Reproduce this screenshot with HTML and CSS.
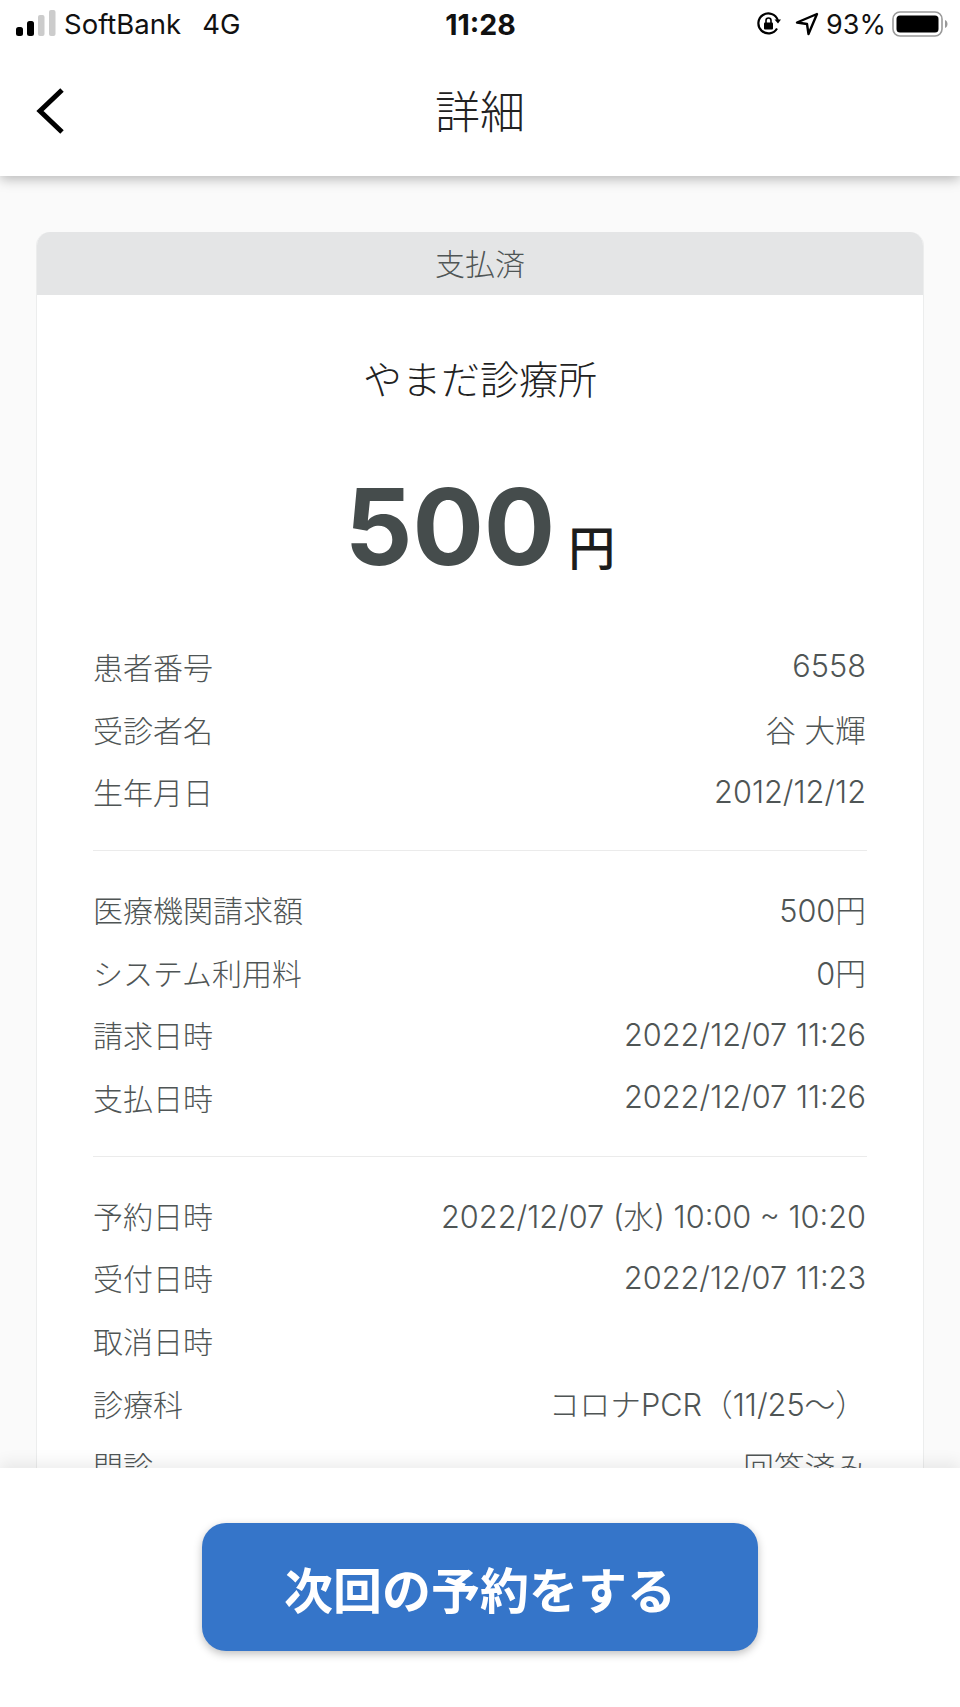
FILE: index.html
```html
<!DOCTYPE html>
<html lang="ja">
<head>
<meta charset="utf-8">
<title>詳細</title>
<link rel="stylesheet" href="styles.css">
</head>
<body>
<div class="app">
  <div class="top">
    <div class="status">
      <div class="status-left">
        <svg class="signal" width="40" height="26" viewBox="0 0 40 26"><rect x="0" y="17" width="7" height="9" rx="2.500" fill="#000"/><rect x="11" y="11" width="7" height="15" rx="2.500" fill="#000"/><rect x="22" y="5" width="6.500" height="21" rx="2" fill="#ccc"/><rect x="33" y="0" width="6.500" height="26" rx="2" fill="#ccc"/></svg>
        <span class="carrier">SoftBank</span><span class="net">4G</span>
      </div>
      <div class="time">11:28</div>
      <div class="status-right">
        <svg width="26" height="26" viewBox="0 0 26 26"><path d="M21 17.500A10 10 0 1 1 21.800 9" fill="none" stroke="#000" stroke-width="2.200"/><path d="M18.500 8.500h6.500l-3 4z" fill="#000"/><rect x="8" y="11.500" width="9" height="7" rx="1" fill="#000"/><path d="M10 12V9.500a2.500 2.500 0 0 1 5 0V12" fill="none" stroke="#000" stroke-width="1.600"/></svg>
        <svg class="arrow" width="24" height="24" viewBox="0 0 24 24"><path d="M22 2 2 10.500l10 1.500 1.500 10z" fill="none" stroke="#000" stroke-width="2.400" stroke-linejoin="round"/></svg>
        <span class="pct">93%</span>
        <svg width="56" height="26" viewBox="0 0 56 26"><rect x="1" y="1" width="49" height="24" rx="7" fill="none" stroke="#999" stroke-width="1.600"/><rect x="4.500" y="4.500" width="42" height="17" rx="3.500" fill="#000"/><path d="M53 9c2 1 2.500 2.500 2.500 4s-.5 3-2.500 4z" fill="#999"/></svg>
      </div>
    </div>
    <header class="nav">
      <svg class="back" width="30" height="46" viewBox="0 0 30 46"><path d="M26 2 4 23l22 21" fill="none" stroke="#000" stroke-width="5"/></svg>
      <h1 class="title">詳細</h1>
    </header>
  </div>
  <main class="content">
    <section class="card">
      <div class="state">支払済</div>
      <div class="card-body">
        <h2 class="clinic">やまだ診療所</h2>
        <p class="amount"><span class="num">500</span><span class="yen">円</span></p>
        <div class="group">
          <div class="row"><span>患者番号</span><span class="val">6558</span></div>
          <div class="row"><span>受診者名</span><span class="val">谷 大輝</span></div>
          <div class="row"><span>生年月日</span><span class="val">2012/12/12</span></div>
        </div>
        <div class="group">
          <div class="row"><span>医療機関請求額</span><span class="val">500円</span></div>
          <div class="row"><span>システム利用料</span><span class="val">0円</span></div>
          <div class="row"><span>請求日時</span><span class="val">2022/12/07 11:26</span></div>
          <div class="row"><span>支払日時</span><span class="val">2022/12/07 11:26</span></div>
        </div>
        <div class="group">
          <div class="row"><span>予約日時</span><span class="val">2022/12/07 (水) 10:00 ~ 10:20</span></div>
          <div class="row"><span>受付日時</span><span class="val">2022/12/07 11:23</span></div>
          <div class="row"><span>取消日時</span><span class="val"></span></div>
          <div class="row"><span>診療科</span><span class="val">コロナPCR（11/25〜）</span></div>
          <div class="row"><span>問診</span><span class="val">回答済み</span></div>
        </div>
      </div>
    </section>
  </main>
  <footer class="foot">
    <button class="cta" type="button">次回の予約をする</button>
  </footer>
</div>
</body>
</html>
```
FILE: styles.css
```css
* { box-sizing: border-box; }
html, body { margin: 0; padding: 0; height: 100%; overflow: hidden; }
body {
  font-family: Inter, "Noto Sans CJK JP", sans-serif;
  color: #4f5555;
  background: #fafafa;
}
.app { display: flex; flex-direction: column; height: 1707px; }
.top {
  position: relative;
  z-index: 2;
  flex: none;
  height: 176px;
  background: #fff;
  box-shadow: 0 3px 12px rgba(0, 0, 0, 0.28);
}
.status {
  display: grid;
  grid-template-columns: 1fr auto 1fr;
  align-items: center;
  height: 48px;
  padding: 0 12px 0 16px;
  font-family: Inter, "Liberation Sans", sans-serif;
  font-size: 27.500px;
  color: #111;
}
.status-left { display: flex; align-items: center; }
.signal { margin-right: 8px; margin-top: -2px; }
.net { margin-left: 21px; }
.time { font-weight: 700; font-size: 28.500px; margin-left: -3px; }
.status-right { display: flex; align-items: center; justify-content: flex-end; gap: 7px; font-size: 27px; }
.arrow { margin-left: 6px; }
.pct { margin-right: -1px; }
.nav { display: flex; align-items: center; justify-content: center; position: relative; height: 128px; padding-bottom: 5px; }
.back { position: absolute; left: 36px; top: 40px; }
.title {
  margin: 0;
  font-family: "Noto Sans CJK JP", sans-serif;
  font-size: 45px;
  font-weight: 300;
  color: #222;
  line-height: 1;
}
.content { flex: 1; min-height: 0; overflow: hidden; padding: 56px 36px 0; }
.card {
  background: #fff;
  border: 1px solid #eceded;
  border-top: 0;
  border-radius: 14px 14px 0 0;
  overflow: hidden;
}
.state {
  height: 63px;
  display: flex;
  align-items: center;
  justify-content: center;
  padding-bottom: 4px;
  background: #e4e5e6;
  font-family: "Noto Sans CJK JP", sans-serif;
  font-size: 30px;
  font-weight: 300;
  color: #4f5555;
}
.card-body { padding: 0 56px 200px; }
.clinic {
  margin: 0;
  padding-top: 57px;
  text-align: center;
  font-family: "Noto Sans CJK JP", sans-serif;
  font-size: 39px;
  font-weight: 300;
  line-height: 50px;
  color: #222;
}
.amount {
  margin: 0;
  padding-top: 70px;
  display: flex;
  justify-content: center;
  align-items: baseline;
  gap: 13px;
  height: 206px;
}
.num {
  font-family: Inter, "Liberation Sans", sans-serif;
  font-size: 106px;
  font-weight: 700;
  line-height: 110px;
  color: #454c4c;
}
.yen { font-family: "Noto Sans CJK JP", sans-serif; font-size: 47px; font-weight: 500; color: #1c1c1c; }
.group { padding: 26.500px 0 27.500px; border-bottom: 1px solid #ebebeb; }
.group:last-child { border-bottom: 0; }
.row {
  display: flex;
  justify-content: space-between;
  align-items: center;
  height: 62.700px;
  font-size: 30.700px;
  font-weight: 300;
  color: #4f5555;
  white-space: nowrap;
}
.row span:first-child { font-family: "Noto Sans CJK JP", sans-serif; font-size: 30px; font-weight: 300; }
.val { padding-right: 1px; }
.foot {
  position: relative;
  z-index: 2;
  flex: none;
  height: 239px;
  background: #fff;
  box-shadow: 0 -6px 14px rgba(0, 0, 0, 0.07);
  display: flex;
  justify-content: center;
  padding-top: 55px;
}
.cta {
  width: 556px;
  height: 128px;
  border: 0;
  border-radius: 24px;
  background: #3575c9;
  color: #fff;
  font-family: "Noto Sans CJK JP", sans-serif;
  font-size: 49px;
  font-weight: 700;
  box-shadow: 0 3px 8px rgba(0, 0, 0, 0.25);
}
```
